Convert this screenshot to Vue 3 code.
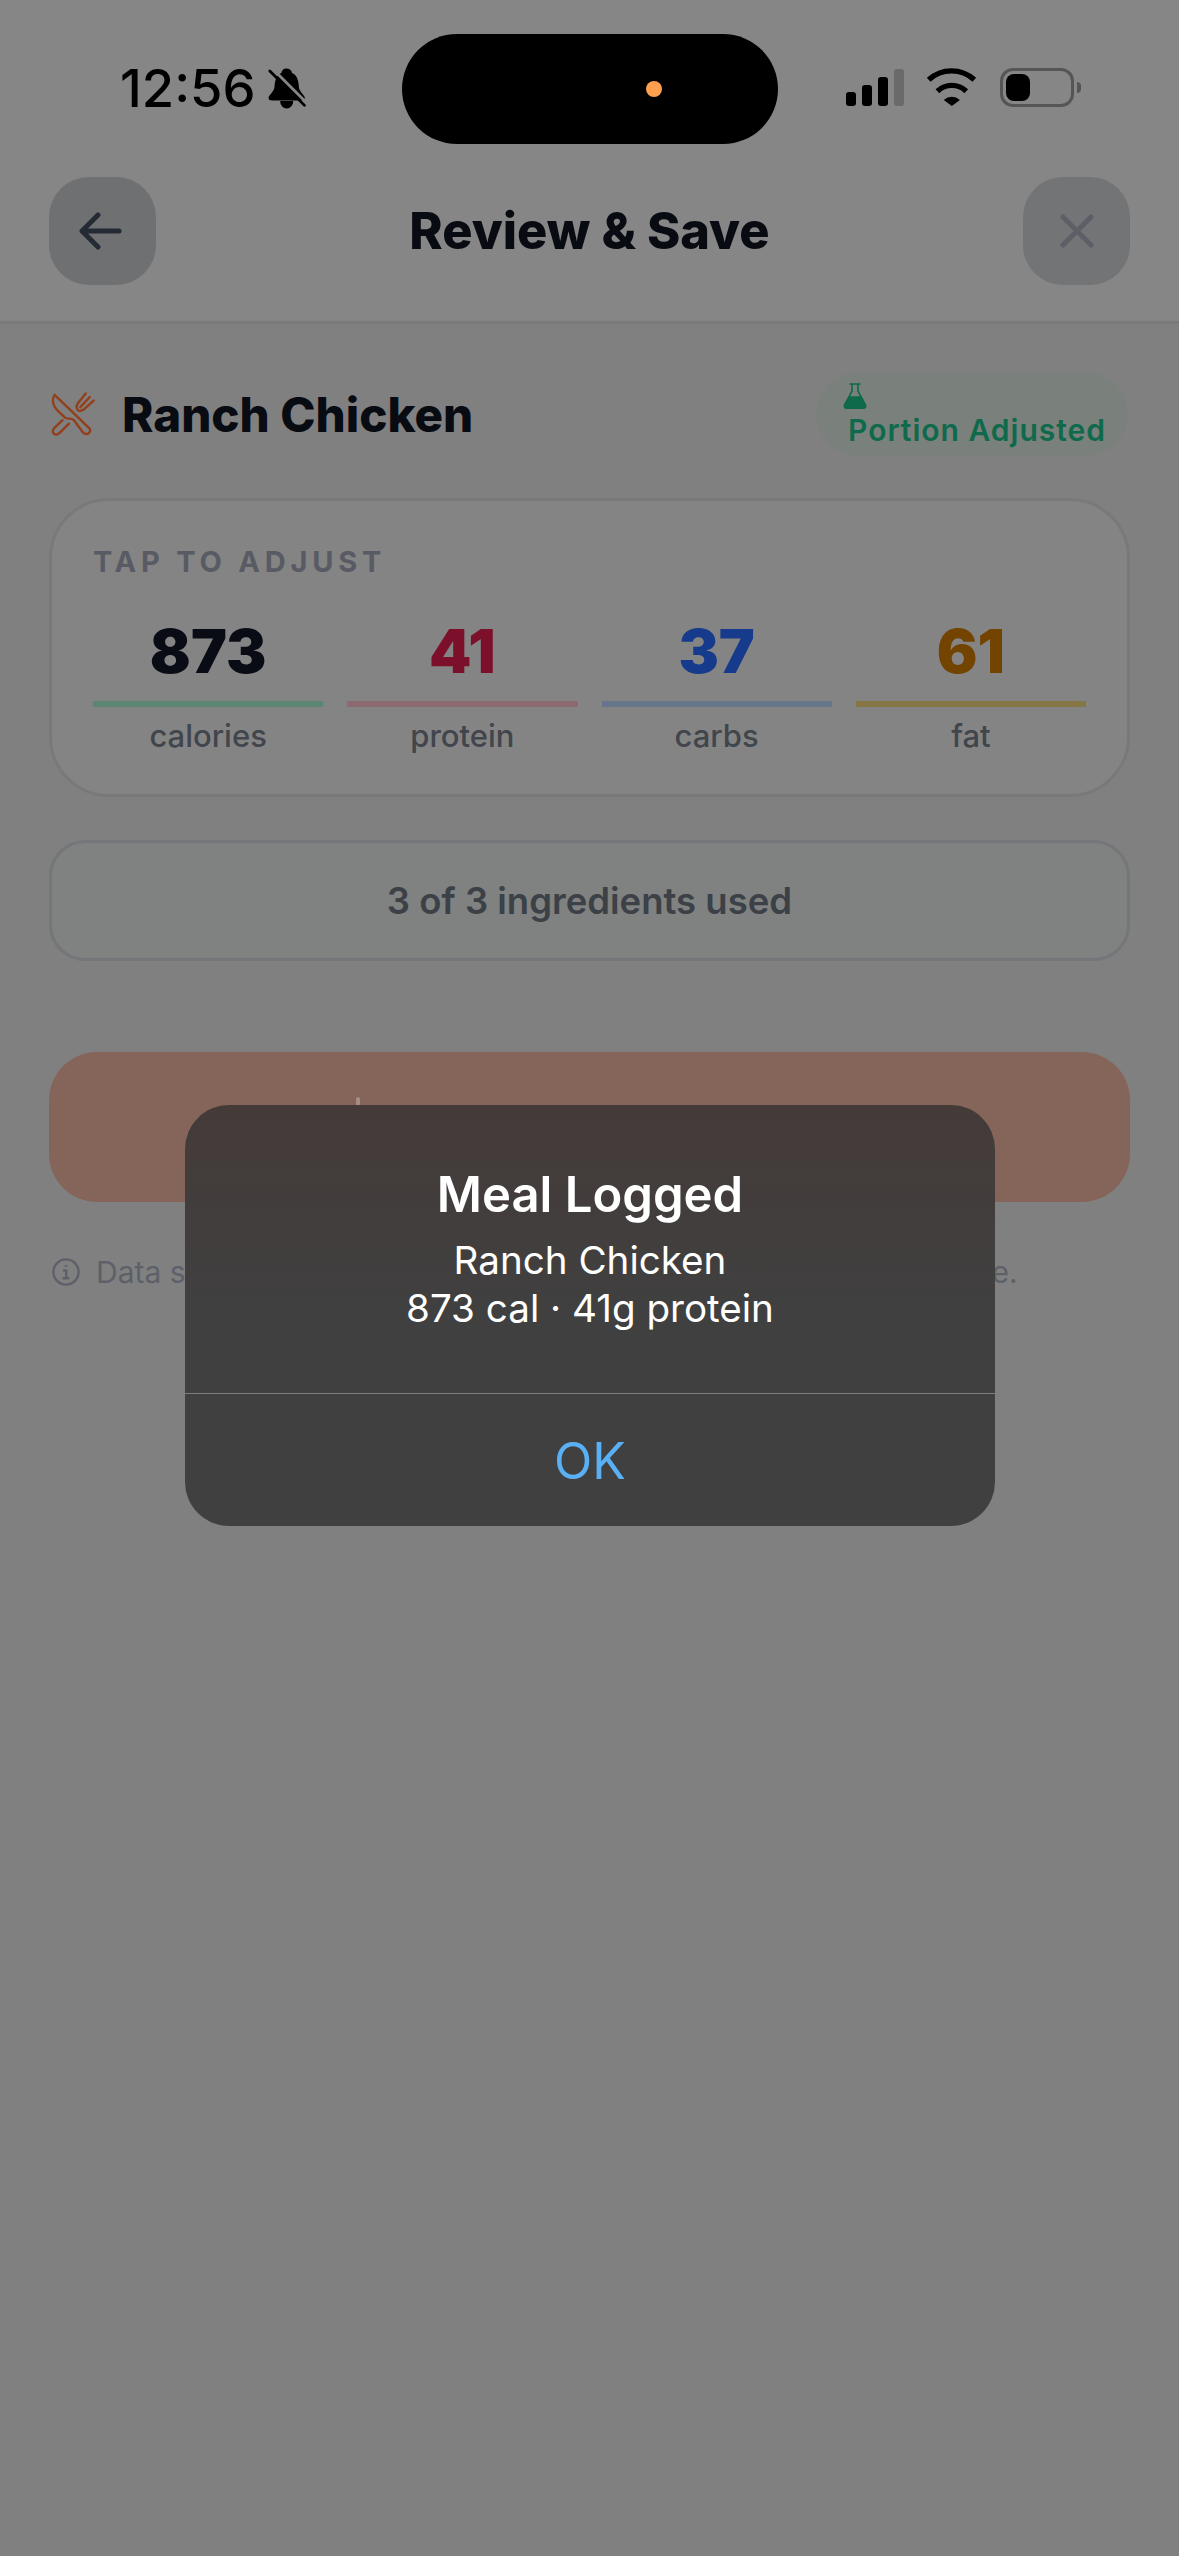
<template>
  <div class="screen">
    <header class="top">
      <div class="status-bar">
        <div class="status-left">
          <span class="clock">12:56</span>
          <svg class="bell" viewBox="495 48 128 136">
            <path d="M556 52c-8 0-14 6-15 14-19 8-21 29-22 46-1 13-19 26-19 34 0 6 5 8 12 8h92c7 0 12-2 12-8 0-8-18-21-19-34-1-17-3-38-22-46-1-8-7-14-19-14z" fill="#000" />
            <path d="M537 154a21 24 0 0 0 42 0z" fill="#000" transform="translate(0 2)" />
            <path d="M512 52l112 112" stroke="#868686" stroke-width="9" fill="none" />
            <path d="M504 60l111 110" stroke="#000" stroke-width="9" stroke-linecap="round" fill="none" />
          </svg>
        </div>
        <div class="status-right">
          <div class="signal">
            <i class="b1"></i><i class="b2"></i><i class="b3"></i><i class="b4"></i>
          </div>
          <svg class="wifi" viewBox="318 55 152 113">
            <path d="M326 90a100 100 0 0 1 136 0" stroke="#000" stroke-width="16" fill="none" />
            <path d="M352 124a62 62 0 0 1 86 0" stroke="#000" stroke-width="16" fill="none" />
            <path d="M371 150a36 36 0 0 1 48 0l-24 18z" fill="#000" />
          </svg>
          <div class="battery"><div class="battery-fill"></div></div>
          <div class="battery-nub"></div>
        </div>
      </div>
      <div class="island"><span class="island-dot"></span></div>

      <nav class="nav">
        <button class="nav-btn back">
          <svg viewBox="0 0 43 38" width="43" height="38">
            <path d="M19 3 3 19l16 16M3 19h37" stroke="#252b35" stroke-width="5" stroke-linecap="round" stroke-linejoin="round" fill="none" />
          </svg>
        </button>
        <h1 class="nav-title">Review &amp; Save</h1>
        <button class="nav-btn close">
          <svg viewBox="0 0 34 34" width="34" height="34">
            <path d="M3 3l28 28M31 3 3 31" stroke="#5c5f66" stroke-width="5" stroke-linecap="round" fill="none" />
          </svg>
        </button>
      </nav>
    </header>

    <main class="content">
      <div class="meal-row">
        <div class="meal-name">
          <svg class="utensils" viewBox="50 60 150 145" fill="none" stroke="#943f1c" stroke-width="7.5" stroke-linecap="round" stroke-linejoin="round">
            <path d="M67 72C58 85 60 105 75 120l25 24c8 6 20 0 28 8l28 38c6 8 20 8 23-4 1-4-1-7-3-9L67 72z" />
            <path d="M92 152 65 178c-7 7-3 19 7 19 5 0 9-3 12-6l28-28" />
            <path d="M165 68 141 98c-6 8-6 17 1 24 8 3 16-2 22-8l26-24M178 79l-30 32" />
          </svg>
          <span>{{ meal.name }}</span>
        </div>
        <div class="adjusted-pill">
          <svg class="flask" viewBox="0 0 72 79">
            <path d="M21 3h30M27 3v22L5 65c-3 6 1 11 7 11h48c6 0 10-5 7-11L45 25V3" fill="none" stroke="#0e6a4a" stroke-width="5" stroke-linecap="round" stroke-linejoin="round" />
            <path d="M17 40h38l15 28c2 6-2 11-8 11H10c-6 0-10-5-8-11z" fill="#0e6a4a" />
          </svg>
          <span>Portion Adjusted</span>
        </div>
      </div>

      <section class="macro-card">
        <div class="macro-label">TAP TO ADJUST</div>
        <div class="macro-grid">
          <div v-for="m in macros" :key="m.label" class="macro">
            <div class="macro-value" :class="m.label">{{ m.value }}</div>
            <div class="macro-bar" :class="m.label"></div>
            <div class="macro-name">{{ m.label }}</div>
          </div>
        </div>
      </section>

      <section class="ingredients">3 of 3 ingredients used</section>

      <button class="save-btn"><i class="save-mark"></i></button>

      <p class="note">
        <svg class="info" viewBox="0 0 28 28" width="28" height="28" fill="none" stroke="#5d6069" stroke-width="2.4">
          <circle cx="14" cy="14" r="12.6" />
          <path d="M11 12.5h3.2V20M10.5 20.2h7" />
          <path d="M14 7.2v1.6" stroke-width="2.8" />
        </svg>
        <span>Data sources vary, so the nutrition numbers are only an estimate.</span>
      </p>
    </main>

    <div class="alert">
      <div class="alert-body">
        <div class="alert-title">Meal Logged</div>
        <div class="alert-text">{{ meal.name }}</div>
        <div class="alert-text">{{ meal.calories }} cal · {{ meal.protein }}g protein</div>
      </div>
      <div class="alert-action">OK</div>
    </div>
  </div>
</template>

<script setup>
const meal = { name: 'Ranch Chicken', calories: 873, protein: 41 }

const macros = [
  { label: 'calories', value: 873 },
  { label: 'protein', value: 41 },
  { label: 'carbs', value: 37 },
  { label: 'fat', value: 61 },
]
</script>

<style>
html, body { background: #808080; }
</style>

<style scoped>
/* colours are as seen behind the alert's dimming */
.screen {
  position: relative;
  width: 1179px;
  height: 2556px;
  overflow: hidden;
  background: #808080;
  font-family: Inter, "Liberation Sans", sans-serif;
}
.top {
  background: #868686;
  border-bottom: 3px solid #797979;
  height: 324px;
  box-sizing: border-box;
}
.status-bar {
  display: flex;
  justify-content: space-between;
  align-items: flex-start;
  height: 177px;
  box-sizing: border-box;
  padding: 67px 98px 0 120px;
}
.status-left { display: flex; align-items: center; gap: 11px; }
.clock {
  font-size: 52.5px;
  line-height: 43px;
  font-weight: 500;
  color: #000;
}
.bell { width: 40px; height: 43px; }
.status-right { display: flex; align-items: flex-start; padding-top: 1px; }
.signal { display: flex; align-items: flex-end; gap: 6px; height: 38px; }
.signal i { display: block; width: 10px; background: #000; border-radius: 3px; }
.signal .b1 { height: 14px; }
.signal .b2 { height: 21px; }
.signal .b3 { height: 29px; }
.signal .b4 { height: 37px; background: #6a6a6a; }
.wifi { width: 51px; height: 38px; margin-left: 22px; }
.battery {
  width: 74px;
  height: 39px;
  box-sizing: border-box;
  margin-left: 23px;
  border: 3px solid #555;
  border-radius: 13px;
  padding: 3px;
}
.battery-fill { width: 24px; height: 27px; background: #000; border-radius: 8px; }
.battery-nub {
  width: 4px;
  height: 11px;
  margin: 14px 0 0 3px;
  background: #555;
  border-radius: 0 4px 4px 0;
}
.island {
  position: absolute;
  top: 34px;
  left: 402px;
  width: 376px;
  height: 110px;
  background: #000;
  border-radius: 55px;
}
.island-dot {
  position: absolute;
  left: 244px;
  top: 47px;
  width: 16px;
  height: 16px;
  border-radius: 50%;
  background: #ff9f4f;
}
.nav {
  display: flex;
  justify-content: space-between;
  align-items: center;
  padding: 0 49px 0;
  height: 108px;
}
.nav-btn {
  display: flex;
  align-items: center;
  justify-content: center;
  width: 107px;
  height: 108px;
  padding: 0;
  border: none;
  border-radius: 40px;
}
.nav-btn.back { background: #6f7072; padding-right: 4px; }
.nav-btn.close { background: #737476; }
.nav-title {
  margin: 0;
  font-size: 50.5px;
  line-height: 58px;
  font-weight: 800;
  color: #090b12;
}
.content { padding: 48px 49px 0; }
.meal-row {
  display: flex;
  justify-content: space-between;
  align-items: center;
  height: 84px;
  padding-right: 2px;
}
.meal-name {
  display: flex;
  align-items: center;
  gap: 25px;
  font-size: 47.5px;
  font-weight: 800;
  color: #090b12;
}
.utensils { width: 48px; height: 46px; }
.adjusted-pill {
  width: 312px;
  height: 84px;
  box-sizing: border-box;
  padding: 11px 0 0 27px;
  background: #7a807c;
  border-radius: 42px;
  color: #0e6a4a;
  font-size: 30px;
  font-weight: 600;
  line-height: 36px;
  letter-spacing: 1px;
}
.flask { display: block; width: 24px; height: 26px; }
.adjusted-pill span { display: block; margin: 3px 0 0 5px; white-space: nowrap; }
.macro-card {
  height: 299px;
  box-sizing: border-box;
  margin-top: 42px;
  padding: 43px 41px 0;
  background: #848484;
  border: 3px solid #797979;
  border-radius: 60px;
}
.macro-label {
  font-size: 29px;
  line-height: 35px;
  font-weight: 700;
  letter-spacing: 4.8px;
  color: #585b63;
}
.macro-grid {
  display: grid;
  grid-template-columns: repeat(4, 1fr);
  gap: 24px;
  margin-top: 33px;
}
.macro { text-align: center; }
.macro-value {
  font-size: 60.5px;
  line-height: 78px;
  font-weight: 900;
}
.macro-value.calories { color: #0a0c15; }
.macro-value.protein { color: #7c102b; }
.macro-value.carbs { color: #163a8c; }
.macro-value.fat { color: #734300; }
.macro-bar { height: 6px; margin-top: 11px; }
.macro-bar.calories { background: #5c8872; }
.macro-bar.protein { background: #8c6a70; }
.macro-bar.carbs { background: #65758a; }
.macro-bar.fat { background: #857745; }
.macro-name {
  margin-top: 11px;
  font-size: 31px;
  line-height: 36px;
  font-weight: 500;
  color: #41454c;
}
.ingredients {
  height: 121px;
  box-sizing: border-box;
  margin-top: 43px;
  display: flex;
  align-items: center;
  justify-content: center;
  background: #7f8280;
  border: 3px solid #74767a;
  border-radius: 36px;
  font-size: 36.5px;
  font-weight: 600;
  color: #3c4047;
}
.save-btn {
  display: block;
  position: relative;
  width: 100%;
  height: 150px;
  margin-top: 91px;
  padding: 0;
  border: none;
  border-radius: 48px;
  background: #85655a;
}
.save-mark {
  position: absolute;
  left: 307px;
  top: 45px;
  width: 4px;
  height: 9px;
  border-radius: 2px;
  background: #a58d84;
}
.note {
  display: flex;
  align-items: center;
  gap: 16px;
  margin: 55px 0 0;
  padding-left: 3px;
  font-size: 30px;
  line-height: 30px;
  color: #5d6069;
  white-space: nowrap;
}
.info { flex-shrink: 0; }
.alert {
  position: absolute;
  top: 1105px;
  left: 185px;
  width: 810px;
  height: 421px;
  background: linear-gradient(#443b39, #404040 50%);
  border-radius: 44px;
  color: #fff;
  text-align: center;
}
.alert-body {
  height: 289px;
  box-sizing: border-box;
  padding-top: 60px;
  border-bottom: 1px solid #7d7d7d;
}
.alert-title {
  font-size: 49px;
  line-height: 60px;
  font-weight: 600;
  margin-bottom: 11px;
}
.alert-text {
  font-size: 38.6px;
  line-height: 48px;
}
.alert-action {
  height: 132px;
  line-height: 134px;
  font-size: 50px;
  color: #5ab0f5;
}
</style>
